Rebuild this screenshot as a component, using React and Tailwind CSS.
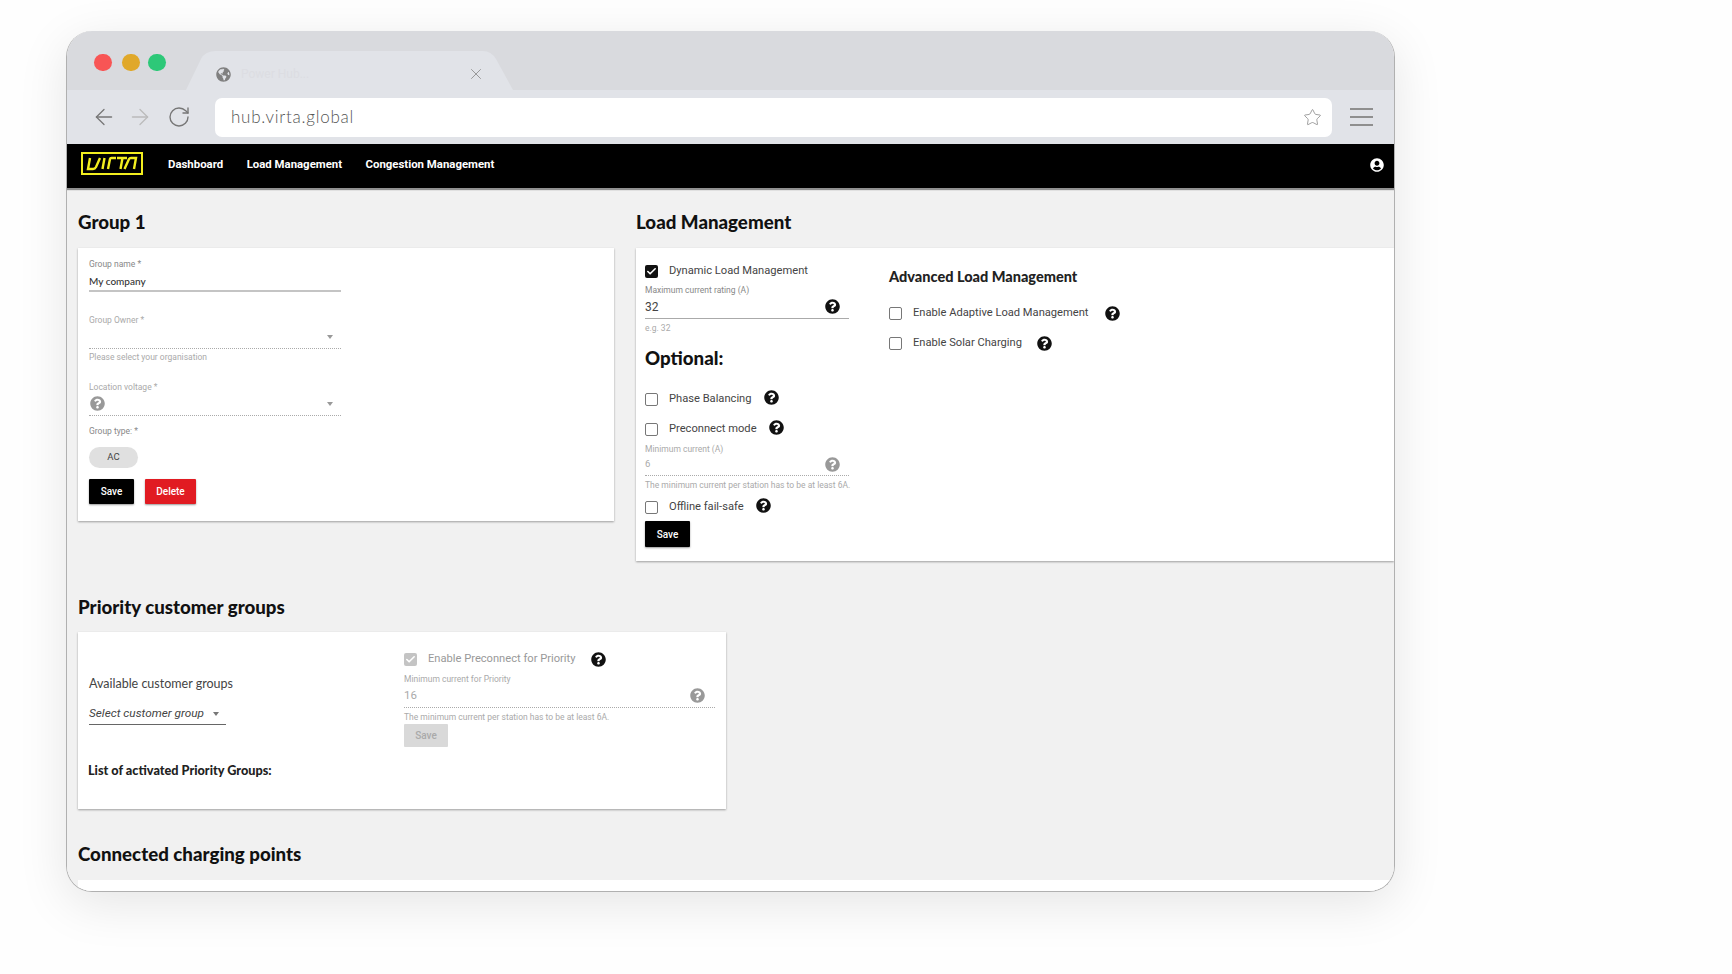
import React from 'react';
import { ArrowLeft, ArrowRight, RotateCw, Star, X, Check } from 'lucide-react';
import { FaQuestionCircle, FaUserCircle, FaGlobeAmericas } from 'react-icons/fa';

const Help = ({ disabled, className = '' }) => (
  <FaQuestionCircle size={15} className={`shrink-0 ${disabled ? 'text-[#999]' : 'text-[#111]'} ${className}`} />
);

const CheckRow = ({ label, checked, disabled, children, className = '' }) => (
  <div className={`flex items-center h-4 ${className}`}>
    <div
      className={`w-[13px] h-[13px] shrink-0 rounded-[2px] flex items-center justify-center ${
        checked ? (disabled ? 'bg-[#c4c4c4]' : 'bg-[#111]') : 'border border-[#777]'
      }`}
    >
      {checked && <Check size={11} strokeWidth={3.5} className="text-white" />}
    </div>
    <span className={`ml-[11px] text-[11.15px] leading-4 whitespace-nowrap ${disabled ? 'text-[#999]' : 'text-[#444]'}`}>
      {label}
    </span>
    {children}
  </div>
);

const Label = ({ children, light, className = '' }) => (
  <div className={`text-[8.5px] leading-[10px] whitespace-nowrap ${light ? 'text-[#aaa]' : 'text-[#888]'} ${className}`}>
    {children}
  </div>
);

const Heading = ({ children, className = '' }) => (
  <h2 className={`font-['Lato'] font-black text-[18.7px] leading-6 text-[#111] ${className}`}>{children}</h2>
);

const Caret = () => (
  <div className="w-0 h-0 border-x-[3.5px] border-x-transparent border-t-[4px] border-t-[#999]" />
);

const SaveButton = ({ className = '' }) => (
  <button className={`w-[45px] h-[26px] bg-black text-white text-[10px] font-medium rounded-[1px] shadow-[0_1px_2px_rgba(0,0,0,0.4)] ${className}`}>
    Save
  </button>
);

const GroupCard = () => (
  <div className="w-[536px] bg-white shadow-[0_1px_2px_rgba(0,0,0,0.35)] pl-[11px] pt-[11px] pb-[17px]">
    <div className="w-[252px]">
      <Label>Group name *</Label>
      <div className="h-[23px] flex items-center pt-[3px] border-b-2 border-[#c4c4c4] text-[10px] font-medium text-[#333] font-['Lato']">
        My company
      </div>

      <Label light className="mt-[23px]">Group Owner *</Label>
      <div className="h-[24px] flex items-center justify-end pr-[8px] border-b border-dotted border-[#aaa]">
        <Caret />
      </div>
      <Label light className="mt-[3px]">Please select your organisation</Label>

      <Label light className="mt-[20px]">Location voltage *</Label>
      <div className="h-[24px] flex items-center justify-between pl-[1px] pr-[8px] border-b border-dotted border-[#aaa]">
        <Help disabled />
        <Caret />
      </div>

      <Label className="mt-[10px]">Group type: *</Label>
      <div className="mt-[11px] w-[49px] h-[21px] rounded-full bg-[#e0e0e0] flex items-center justify-center text-[9.5px] text-[#444]">
        AC
      </div>
      <div className="mt-[11px] flex gap-[11px]">
        <SaveButton className="!h-[25px]" />
        <button className="w-[51px] h-[25px] bg-[#e11b22] text-white text-[10px] font-medium rounded-[1px] shadow-[0_1px_2px_rgba(0,0,0,0.4)]">
          Delete
        </button>
      </div>
    </div>
  </div>
);

const LoadCard = () => (
  <div className="flex-1 flex bg-white shadow-[0_1px_2px_rgba(0,0,0,0.35)] pl-[9px] pt-[15px] pb-[14px]">
    <div className="w-[204px]">
      <CheckRow label="Dynamic Load Management" checked />
      <Label className="mt-[6px]">Maximum current rating (A)</Label>
      <div className="h-[24px] flex items-center justify-between pr-[9px] border-b border-[#aaa] text-[12px] text-[#444]">
        32
        <Help />
      </div>
      <Label light className="mt-[4px]">e.g. 32</Label>

      <Heading className="mt-[13px]">Optional:</Heading>

      <CheckRow label="Phase Balancing" className="mt-[21px]">
        <Help className="ml-3 -translate-y-0.5" />
      </CheckRow>
      <CheckRow label="Preconnect mode" className="mt-[14px]">
        <Help className="ml-3 -translate-y-0.5" />
      </CheckRow>
      <Label light className="mt-[7px]">Minimum current (A)</Label>
      <div className="h-[22px] flex items-center justify-between pr-[9px] border-b border-dotted border-[#aaa] text-[9.5px] text-[#aaa]">
        6
        <Help disabled />
      </div>
      <Label light className="mt-[4px]">The minimum current per station has to be at least 6A.</Label>
      <CheckRow label="Offline fail-safe" className="mt-[9px]">
        <Help className="ml-3 -translate-y-0.5" />
      </CheckRow>
      <SaveButton className="mt-[6px]" />
    </div>

    <div className="ml-[40px] pt-[4px]">
      <h3 className="font-['Lato'] font-black text-[14.5px] leading-5 text-[#222]">Advanced Load Management</h3>
      <CheckRow label="Enable Adaptive Load Management" className="mt-[18px]">
        <Help className="ml-4" />
      </CheckRow>
      <CheckRow label="Enable Solar Charging" className="mt-[14px]">
        <Help className="ml-[15px]" />
      </CheckRow>
    </div>
  </div>
);

const PriorityCard = () => (
  <div className="w-[648px] h-[177px] flex bg-white shadow-[0_1px_2px_rgba(0,0,0,0.35)]">
    <div className="w-[326px] pl-[11px] pt-[44px]">
      <div className="font-['Lato'] text-[12.5px] leading-4 text-[#444]">Available customer groups</div>
      <div className="mt-[11px] w-[137px] h-[22px] flex items-center gap-[9px] border-b border-[#666] text-[11.8px] italic text-[#444] whitespace-nowrap">
        Select customer group
        <div className="w-0 h-0 border-x-[3.5px] border-x-transparent border-t-[4px] border-t-[#777]" />
      </div>
      <div className="mt-[38px] -ml-px font-['Lato'] font-black text-[12.7px] leading-[14px] text-[#222] whitespace-nowrap">
        List of activated Priority Groups:
      </div>
    </div>
    <div className="w-[311px] pt-[19px]">
      <CheckRow label="Enable Preconnect for Priority" checked disabled>
        <Help className="ml-4" />
      </CheckRow>
      <Label light className="mt-[7px]">Minimum current for Priority</Label>
      <div className="h-[24px] flex items-center justify-between pr-[10px] border-b border-dotted border-[#aaa] text-[11.5px] text-[#aaa]">
        16
        <Help disabled />
      </div>
      <Label light className="mt-[4px]">The minimum current per station has to be at least 6A.</Label>
      <button className="mt-[2px] w-[44px] h-[23px] bg-[#d9d9d9] text-[#aaa] text-[10px] font-medium rounded-[1px]">
        Save
      </button>
    </div>
  </div>
);

export default function App() {
  return (
    <div className="w-[1732px] h-[974px] bg-[#fefefe] pl-[66px] pt-[31px] overflow-hidden font-['Roboto',sans-serif]">
      <div className="w-[1329px] h-[861px] flex flex-col rounded-[26px] overflow-hidden border-x border-b border-[#b0b0b0] shadow-[0_12px_50px_rgba(0,0,0,0.1)]">
        {/* tab bar */}
        <div className="h-[59px] shrink-0 -mx-px bg-[#d9dade] flex items-start pl-[28px]">
          <div className="flex items-center mt-[23px]">
            <div className="w-[18px] h-[17px] rounded-full bg-[#f85555]" />
            <div className="w-[18px] h-[17px] rounded-full bg-[#e0a82a] ml-[10px]" />
            <div className="w-[18px] h-[17px] rounded-full bg-[#2dc878] ml-[8px]" />
          </div>
          <div className="relative w-[327px] h-[39px] mt-[20px] ml-[20px] flex items-center pl-[30px] pr-[28px] pt-[7px]">
            <svg className="absolute inset-0" width="327" height="39" viewBox="0 0 327 39">
              <path d="M0 39 L15 8 Q19 0 30 0 H297 Q305 0 310 8 L327 39 Z" fill="#e1e3e8" />
            </svg>
            <FaGlobeAmericas size={15} className="relative text-[#808080]" />
            <span className="relative ml-[10px] text-[12px] text-[#dcdde2]">Power Hub...</span>
            <X size={18} strokeWidth={1.1} className="relative ml-auto text-[#888]" />
          </div>
        </div>

        {/* toolbar */}
        <div className="h-[54px] shrink-0 -mx-px bg-[#e1e3e8] flex items-center pl-[25px]">
          <ArrowLeft size={26} strokeWidth={1.2} className="text-[#777]" />
          <ArrowRight size={26} strokeWidth={1.2} className="ml-[10px] text-[#bbb]" />
          <RotateCw size={24} strokeWidth={1.4} className="ml-[14px] text-[#777]" />
          <div className="ml-[24px] w-[1117px] h-[39px] bg-white rounded-[7px] flex items-center justify-between pl-[16px] pr-[10px]">
            <span className="font-['Lato'] font-light text-[17px] tracking-[0.75px] text-[#555]">hub.virta.global</span>
            <Star size={19} strokeWidth={1} className="text-[#888]" />
          </div>
          <div className="ml-[18px] w-[23px] flex flex-col gap-[6px]">
            <div className="h-[2px] bg-[#8f8f8f]" />
            <div className="h-[2px] bg-[#8f8f8f]" />
            <div className="h-[2px] bg-[#8f8f8f]" />
          </div>
        </div>

        {/* app nav */}
        <div className="relative h-[44px] shrink-0 bg-black flex items-center pl-[14px] pr-[10px] pb-[3px] shadow-[0_2px_1px_rgba(0,0,0,0.4)]">
          <svg width="62" height="23" viewBox="0 0 62 23" fill="none" stroke="#f2ee1f" strokeWidth="2.4" className="-translate-y-px">
            <rect x="1" y="1" width="60" height="21" strokeWidth="2" />
            <path d="M9 6 L7 17 H12 Q14 17 15 15 L19 6" />
            <path d="M23.5 6 L21.5 17" />
            <path d="M27 17 L29 7 Q29.2 6 30.5 6 H35" />
            <path d="M36 6 H46 M41.5 6 L39.5 17" />
            <path d="M43.5 17 L48 7 Q48.5 6 50 6 H55 L53 17" />
          </svg>
          <div className="ml-[25px] flex gap-[23.5px] text-[11.4px] font-bold text-white whitespace-nowrap">
            <span>Dashboard</span>
            <span>Load Management</span>
            <span>Congestion Management</span>
          </div>
          <FaUserCircle size={14} className="ml-auto text-white" />
        </div>

        {/* page content */}
        <div className="flex-1 min-h-0 bg-[#f1f1f1] pl-[11px]">
          <div className="flex gap-[22px] items-start">
            <div className="w-[536px]">
              <Heading className="mt-[21.5px] mb-[14.5px]">Group 1</Heading>
              <GroupCard />
            </div>
            <div className="flex-1">
              <Heading className="mt-[21.5px] mb-[14.5px]">Load Management</Heading>
              <LoadCard />
            </div>
          </div>

          <Heading className="mt-[33.5px] mb-[13.5px]">Priority customer groups</Heading>
          <PriorityCard />

          <Heading className="mt-[33px] mb-[14px]">Connected charging points</Heading>
          <div className="h-[40px] bg-white" />
        </div>
      </div>
    </div>
  );
}
